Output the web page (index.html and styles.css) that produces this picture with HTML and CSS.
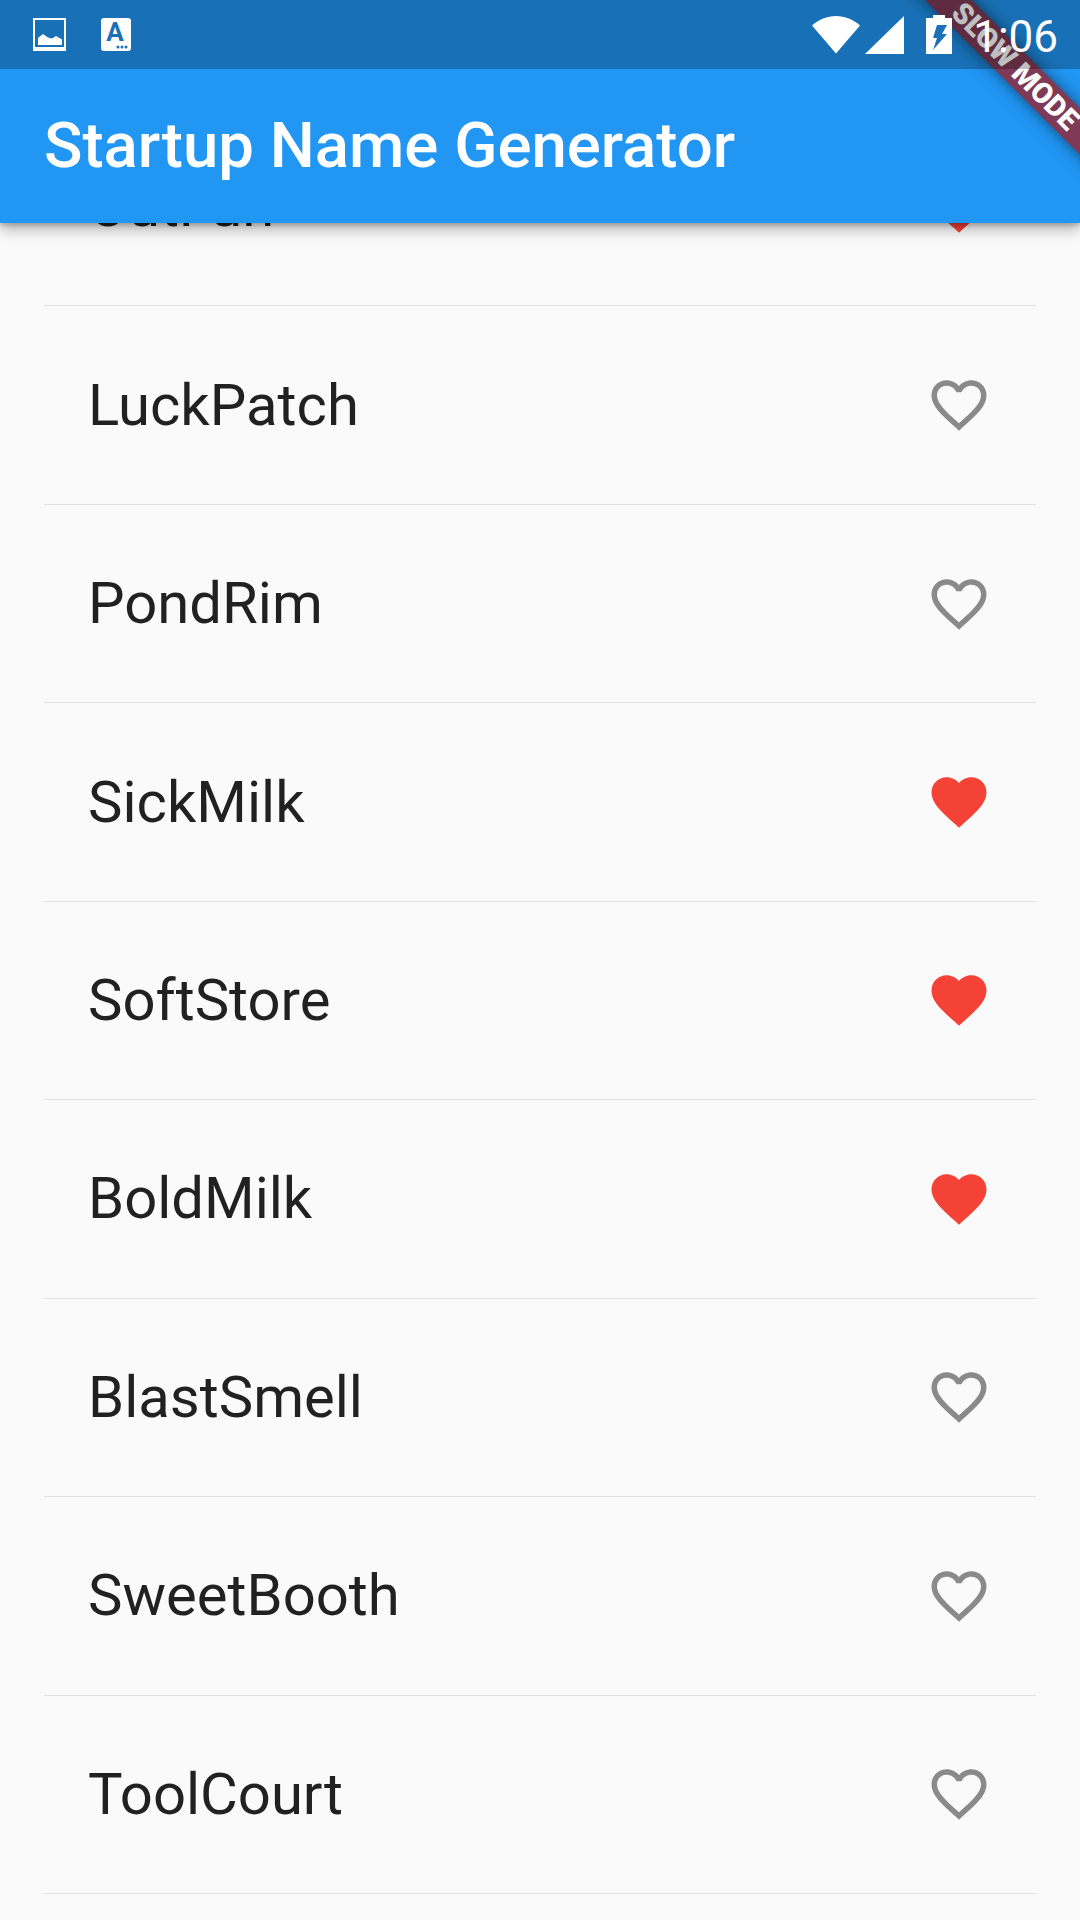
FILE: index.html
```html
<!DOCTYPE html>
<html lang="en">
<head>
    <meta charset="UTF-8">
    <meta name="viewport" content="width=device-width, initial-scale=1.0">
    <title>Startup Name Generator</title>
    <link rel="stylesheet" href="styles.css">
</head>
<body>
    <svg class="icon-defs" width="0" height="0">
        <symbol id="heart-full" viewBox="0 0 24 24">
            <path d="M12 21.35l-1.45-1.32C5.4 15.36 2 12.28 2 8.5 2 5.42 4.42 3 7.5 3c1.74 0 3.41.81 4.5 2.09C13.09 3.81 14.76 3 16.5 3 19.58 3 22 5.42 22 8.5c0 3.78-3.4 6.86-8.55 11.54L12 21.35z"/>
        </symbol>
        <symbol id="heart-border" viewBox="0 0 24 24">
            <path d="M16.5 3c-1.74 0-3.41.81-4.5 2.09C10.91 3.81 9.24 3 7.5 3 4.42 3 2 5.42 2 8.5c0 3.78 3.4 6.86 8.55 11.54L12 21.35l1.45-1.32C18.6 15.36 22 12.28 22 8.5 22 5.42 19.58 3 16.5 3zm-4.4 15.55l-.1.1-.1-.1C7.14 14.24 4 11.39 4 8.5 4 6.5 5.5 5 7.5 5c1.54 0 3.04.99 3.57 2.36h1.87C13.46 5.99 14.96 5 16.5 5c2 0 3.5 1.5 3.5 3.5 0 2.89-3.14 5.74-7.9 10.05z"/>
        </symbol>
    </svg>

    <div class="screen">
        <header class="app-header">
            <div class="slow-banner">SLOW MODE</div>
            <div class="status-bar">
                <svg class="status-left" width="33" height="33" viewBox="0 0 33 33">
                    <path fill="#fff" fill-rule="evenodd" d="M0 0h33v33H0zM2 2v27h29V2zM5 27v-7l5-4 5 3.500 4 1 4-2.500 6 3.500V27z"/>
                </svg>
                <svg class="status-left" width="30" height="33" viewBox="0 0 30 33">
                    <rect width="30" height="33" rx="3" fill="#fff"/>
                    <text x="14" y="23" class="status-letter">A</text>
                    <circle cx="17" cy="29" r="1.500" fill="#1b71b7"/>
                    <circle cx="21" cy="29" r="1.500" fill="#1b71b7"/>
                    <circle cx="25" cy="29" r="1.500" fill="#1b71b7"/>
                </svg>
                <div class="status-right">
                    <svg width="48" height="38" viewBox="0 0 48 38">
                        <path fill="#fff" d="M24 37.500L0 9.500C7 3.500 15 0 24 0s17 3.500 24 9.500z"/>
                    </svg>
                    <svg class="signal" width="39" height="38" viewBox="0 0 39 38">
                        <path fill="#fff" d="M0 38L39 0v38z"/>
                    </svg>
                    <svg class="battery" width="26" height="39" viewBox="0 0 26 39">
                        <path fill="#fff" d="M7 0h12v3h7v36H0V3h7z"/>
                        <path fill="#1b71b7" d="M11 10h10l-5 9h5L7 35l4-12H7z"/>
                    </svg>
                    <span class="clock">1:06</span>
                </div>
            </div>
            <div class="toolbar">Startup Name Generator</div>
        </header>

        <main class="name-list">
            <div class="name-row first-row">
                <span>OutFun</span>
                <svg class="heart liked"><use href="#heart-full"/></svg>
            </div>
            <div class="name-row">
                <span>LuckPatch</span>
                <svg class="heart"><use href="#heart-border"/></svg>
            </div>
            <div class="name-row">
                <span>PondRim</span>
                <svg class="heart"><use href="#heart-border"/></svg>
            </div>
            <div class="name-row">
                <span>SickMilk</span>
                <svg class="heart liked"><use href="#heart-full"/></svg>
            </div>
            <div class="name-row">
                <span>SoftStore</span>
                <svg class="heart liked"><use href="#heart-full"/></svg>
            </div>
            <div class="name-row">
                <span>BoldMilk</span>
                <svg class="heart liked"><use href="#heart-full"/></svg>
            </div>
            <div class="name-row">
                <span>BlastSmell</span>
                <svg class="heart"><use href="#heart-border"/></svg>
            </div>
            <div class="name-row">
                <span>SweetBooth</span>
                <svg class="heart"><use href="#heart-border"/></svg>
            </div>
            <div class="name-row">
                <span>ToolCourt</span>
                <svg class="heart"><use href="#heart-border"/></svg>
            </div>
        </main>
    </div>
</body>
</html>
```

FILE: styles.css
```css
html, body {
    margin: 0;
    padding: 0;
}
body {
    font-family: Roboto, "Liberation Sans", sans-serif;
    background-color: #fafafa;
}
.icon-defs {
    position: absolute;
}
.screen {
    width: 1080px;
    height: 1920px;
    display: flex;
    flex-direction: column;
    overflow: hidden;
    position: relative;
}
.app-header {
    position: relative;
    z-index: 2;
    flex: none;
    overflow: visible;
    background-color: #2196f3;
    box-shadow: 0 6px 14px rgba(0, 0, 0, 0.3), 0 2px 5px rgba(0, 0, 0, 0.2);
}
.status-bar {
    position: relative;
    z-index: 2;
    height: 69px;
    display: flex;
    align-items: center;
    padding: 0 22px 0 33px;
    background-color: rgba(0, 0, 0, 0.25);
}
.status-left {
    margin-right: 35px;
}
.status-letter {
    font-size: 26px;
    font-weight: 700;
    fill: #1b71b7;
    text-anchor: middle;
}
.status-right {
    margin-left: auto;
    display: flex;
    align-items: center;
}
.signal {
    margin-left: 5px;
}
.battery {
    margin-left: 22px;
}
.clock {
    margin-left: 21px;
    padding-top: 4px;
    color: white;
    font-size: 44px;
    line-height: 1;
}
.toolbar {
    height: 154px;
    box-sizing: border-box;
    display: flex;
    align-items: center;
    padding: 0 0 2px 44px;
    color: white;
    font-size: 63.5px;
    font-weight: 500;
}
/* corner ribbon, sits under the status bar tint */
.slow-banner {
    position: absolute;
    z-index: 1;
    left: 815px;
    top: 50px;
    width: 400px;
    height: 33px;
    line-height: 33px;
    text-align: center;
    transform: rotate(45deg);
    background-color: #7e3a56;
    box-shadow: 0 0 16px rgba(0, 0, 0, 0.5);
    color: white;
    font-size: 29px;
    font-weight: 900;
}
.name-list {
    flex: 1;
    overflow: hidden;
}
.name-row {
    height: 198.45px;
    box-sizing: border-box;
    margin: 0 44px;
    padding-left: 44px;
    display: flex;
    align-items: center;
    justify-content: space-between;
    border-bottom: 1px solid #e0e0e0;
    color: rgba(0, 0, 0, 0.87);
    font-size: 58px;
}
.name-row span {
    padding-bottom: 1px;
}
.first-row {
    margin-top: -115px;
}
.heart {
    width: 66px;
    height: 66px;
    margin-right: 44px;
    fill: #8a8a8a;
}
.heart.liked {
    fill: #f44336;
}
```
